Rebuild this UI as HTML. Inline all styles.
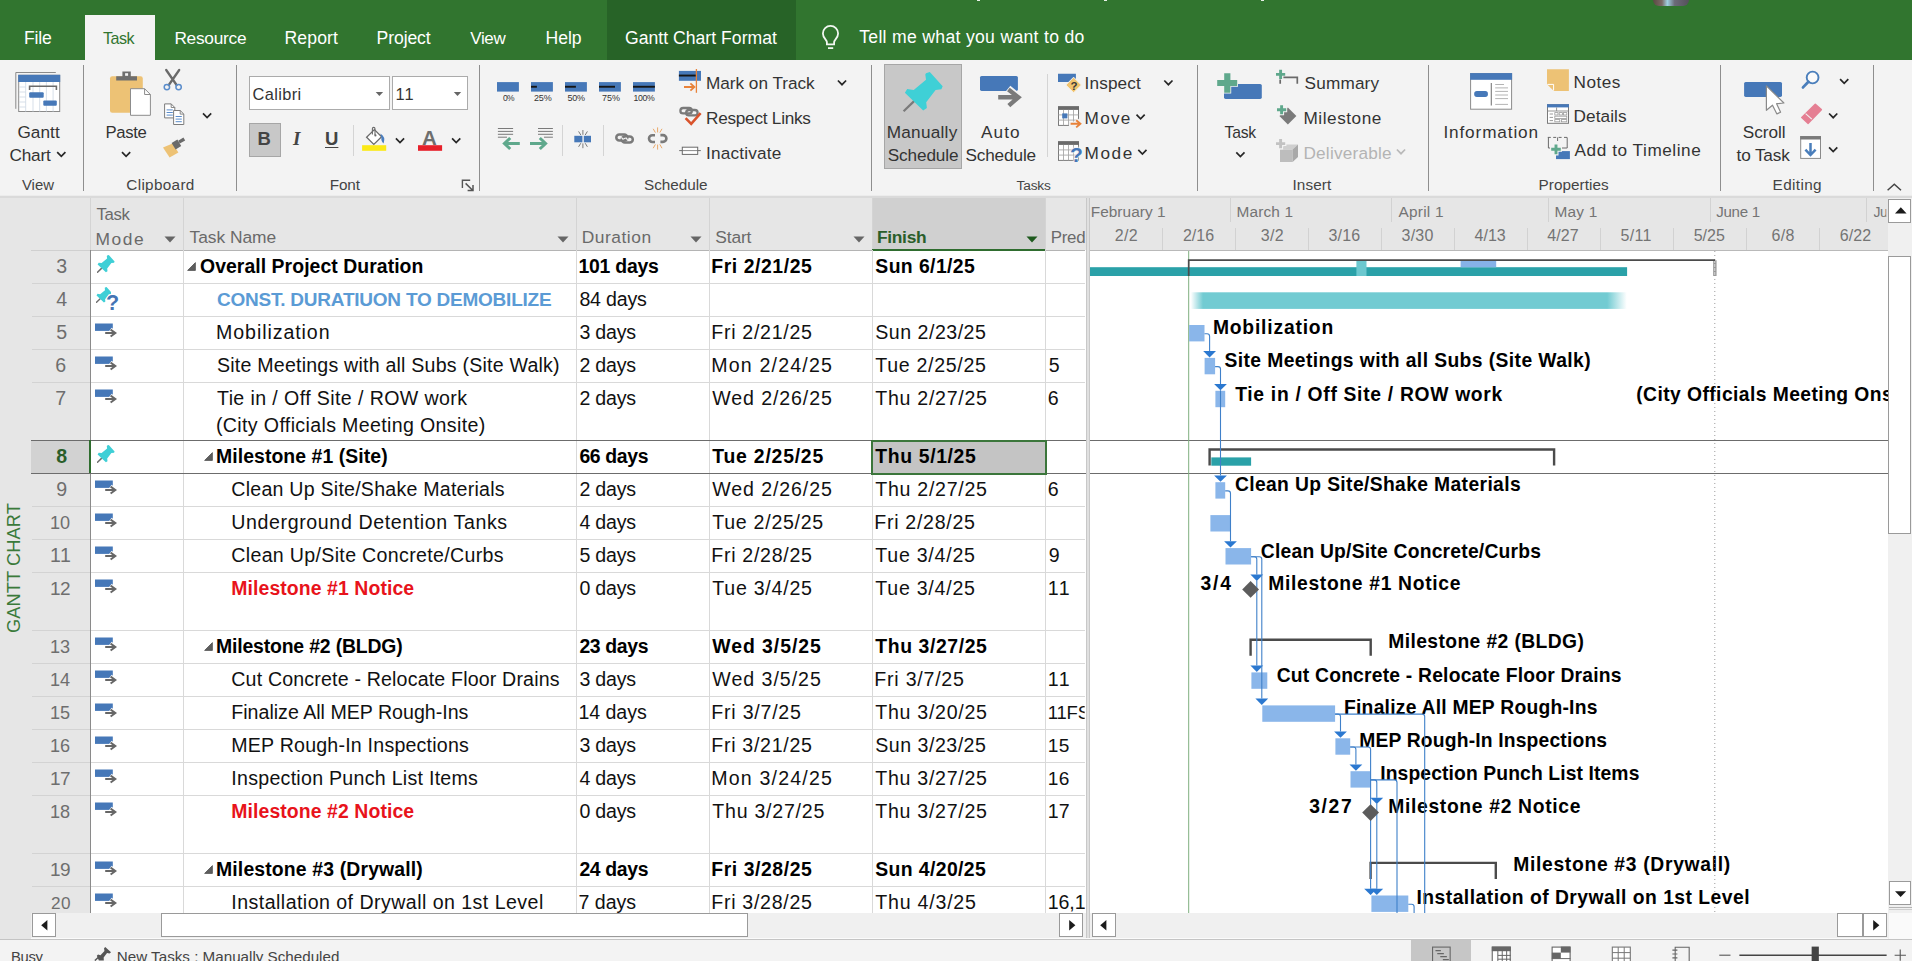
<!DOCTYPE html>
<html lang="en"><head><meta charset="utf-8"><title>Gantt Chart - Project</title>
<style>
html,body{margin:0;padding:0;background:#fff}
body{width:1912px;height:961px;overflow:hidden;position:relative;font-family:"Liberation Sans",sans-serif}
#app{position:absolute;left:0;top:0;width:1912px;height:961px;overflow:hidden}
#app div,#app svg,#app span{position:absolute}
.t{white-space:pre;line-height:1}
</style></head>
<body><div id="app">
<div style="left:0px;top:0px;width:1912px;height:60px;background:#31752f;"></div>
<div style="left:977px;top:0px;width:3px;height:1px;background:#e8f0e8;"></div>
<div style="left:1104px;top:0px;width:3px;height:1px;background:#e8f0e8;"></div>
<div style="left:1261px;top:0px;width:3px;height:1px;background:#e8f0e8;"></div>
<div style="left:1653px;top:0;width:36px;height:6px;background:linear-gradient(90deg,#5a4a42 0,#7b6a66 25%,#9fd0e0 40%,#6b6a78 60%,#55505a 100%);border-radius:0 0 8px 8px"></div>
<div style="left:85px;top:15px;width:70px;height:45px;background:#f3f3f3;"></div>
<div style="left:607px;top:0px;width:189px;height:60px;background:#276327;"></div>
<span class="t" style="left:24.1px;top:30px;font-size:17.6px;color:#fff;letter-spacing:-0.25px;">File</span>
<span class="t" style="left:103.0px;top:30px;font-size:16.1px;color:#31752f;letter-spacing:-0.51px;">Task</span>
<span class="t" style="left:174.4px;top:30px;font-size:17.3px;color:#fff;letter-spacing:-0.25px;">Resource</span>
<span class="t" style="left:284.5px;top:30px;font-size:17.6px;color:#fff;letter-spacing:0.12px;">Report</span>
<span class="t" style="left:376.6px;top:30px;font-size:17.6px;color:#fff;letter-spacing:-0.11px;">Project</span>
<span class="t" style="left:470.3px;top:30px;font-size:17px;color:#fff;letter-spacing:-0.39px;">View</span>
<span class="t" style="left:545.6px;top:30px;font-size:17.6px;color:#fff;letter-spacing:-0.07px;">Help</span>
<span class="t" style="left:625.0px;top:30px;font-size:17.6px;color:#fff;letter-spacing:0.02px;">Gantt Chart Format</span>
<span class="t" style="left:859.2px;top:29px;font-size:17.6px;color:#fff;letter-spacing:0.31px;">Tell me what you want to do</span>
<div style="left:0px;top:60px;width:1912px;height:136.2px;background:#f3f3f3;"></div>
<div style="left:0px;top:195px;width:1912px;height:1.2px;background:#ececec;"></div>
<div style="left:0px;top:196.2px;width:1912px;height:1.5px;background:#dadada;"></div>
<div style="left:83.2px;top:65px;width:1.1px;height:126px;background:#8e8e8e;"></div>
<div style="left:236.2px;top:65px;width:1.1px;height:126px;background:#8e8e8e;"></div>
<div style="left:479px;top:65px;width:1.1px;height:126px;background:#8e8e8e;"></div>
<div style="left:871.3px;top:65px;width:1.1px;height:126px;background:#8e8e8e;"></div>
<div style="left:1197px;top:65px;width:1.1px;height:126px;background:#8e8e8e;"></div>
<div style="left:1428px;top:65px;width:1.1px;height:126px;background:#8e8e8e;"></div>
<div style="left:1720.3px;top:65px;width:1.1px;height:126px;background:#8e8e8e;"></div>
<div style="left:1873.3px;top:65px;width:1.1px;height:126px;background:#8e8e8e;"></div>
<div style="left:1046.5px;top:74px;width:1px;height:83px;background:#d4d4d4;"></div>
<div style="left:353.3px;top:125px;width:1px;height:31px;background:#d4d4d4;"></div>
<div style="left:562.2px;top:125px;width:1px;height:31px;background:#d4d4d4;"></div>
<div style="left:603px;top:125px;width:1px;height:31px;background:#d4d4d4;"></div>
<span class="t" style="left:21.9px;top:178px;font-size:14.9px;color:#444;letter-spacing:0.02px;">View</span>
<span class="t" style="left:126.3px;top:177px;font-size:15.3px;color:#444;letter-spacing:0.32px;">Clipboard</span>
<span class="t" style="left:329.7px;top:177px;font-size:15.3px;color:#444;letter-spacing:-0.09px;">Font</span>
<span class="t" style="left:644.0px;top:177px;font-size:15.3px;color:#444;letter-spacing:-0.04px;">Schedule</span>
<span class="t" style="left:1016.6px;top:179px;font-size:13.7px;color:#444;letter-spacing:-0.19px;">Tasks</span>
<span class="t" style="left:1292.5px;top:177px;font-size:15.3px;color:#444;letter-spacing:0.10px;">Insert</span>
<span class="t" style="left:1538.5px;top:177px;font-size:15.3px;color:#444;letter-spacing:0.05px;">Properties</span>
<span class="t" style="left:1772.6px;top:177px;font-size:15.3px;color:#444;letter-spacing:0.36px;">Editing</span>
<span class="t" style="left:17.4px;top:124px;font-size:17.2px;color:#333;letter-spacing:0.08px;">Gantt</span>
<span class="t" style="left:9.5px;top:147px;font-size:17.2px;color:#333;letter-spacing:-0.19px;">Chart</span>
<span class="t" style="left:105.4px;top:125px;font-size:16.7px;color:#333;letter-spacing:-0.30px;">Paste</span>
<div style="left:884px;top:64px;width:78px;height:104.5px;background:#c8c8c8;border:1px solid #a6a6a6;box-sizing:border-box"></div>
<span class="t" style="left:886.7px;top:124px;font-size:17.2px;color:#333;letter-spacing:0.26px;">Manually</span>
<span class="t" style="left:887.7px;top:147px;font-size:17.2px;color:#333;letter-spacing:-0.12px;">Schedule</span>
<span class="t" style="left:981.0px;top:124px;font-size:17.2px;color:#333;letter-spacing:1.07px;">Auto</span>
<span class="t" style="left:965.4px;top:147px;font-size:17.2px;color:#333;letter-spacing:-0.13px;">Schedule</span>
<span class="t" style="left:1224.5px;top:125px;font-size:15.7px;color:#333;letter-spacing:-0.20px;">Task</span>
<span class="t" style="left:1443.4px;top:124px;font-size:17.2px;color:#333;letter-spacing:0.87px;">Information</span>
<span class="t" style="left:1742.8px;top:124px;font-size:17.2px;color:#333;letter-spacing:-0.03px;">Scroll</span>
<span class="t" style="left:1736.6px;top:147px;font-size:17.2px;color:#333;letter-spacing:-0.16px;">to Task</span>
<span class="t" style="left:706.0px;top:75px;font-size:17.2px;color:#333;letter-spacing:-0.02px;">Mark on Track</span>
<span class="t" style="left:706.0px;top:110px;font-size:17.2px;color:#333;letter-spacing:-0.25px;">Respect Links</span>
<span class="t" style="left:706.0px;top:145px;font-size:17.2px;color:#333;letter-spacing:0.18px;">Inactivate</span>
<span class="t" style="left:1084.6px;top:75px;font-size:17.2px;color:#333;letter-spacing:0.13px;">Inspect</span>
<span class="t" style="left:1084.6px;top:110px;font-size:17.2px;color:#333;letter-spacing:1.24px;">Move</span>
<span class="t" style="left:1084.6px;top:145px;font-size:17.2px;color:#333;letter-spacing:1.55px;">Mode</span>
<span class="t" style="left:1304.5px;top:75px;font-size:17.2px;color:#333;letter-spacing:0.18px;">Summary</span>
<span class="t" style="left:1303.5px;top:110px;font-size:17.2px;color:#333;letter-spacing:0.54px;">Milestone</span>
<span class="t" style="left:1303.5px;top:145px;font-size:17.2px;color:#b4b4b4;letter-spacing:0.20px;">Deliverable</span>
<span class="t" style="left:1573.6px;top:74px;font-size:17.2px;color:#333;letter-spacing:0.47px;">Notes</span>
<span class="t" style="left:1573.6px;top:108px;font-size:17.2px;color:#333;letter-spacing:0.06px;">Details</span>
<span class="t" style="left:1574.6px;top:142px;font-size:17.2px;color:#333;letter-spacing:0.55px;">Add to Timeline</span>
<div style="left:249.2px;top:76.3px;width:140.6px;height:34.2px;background:#fff;border:1px solid #ababab;box-sizing:border-box"></div>
<div style="left:392.3px;top:76.3px;width:75.3px;height:34.2px;background:#fff;border:1px solid #ababab;box-sizing:border-box"></div>
<span class="t" style="left:252.4px;top:86px;font-size:16.4px;color:#333;letter-spacing:0.40px;">Calibri</span>
<span class="t" style="left:395.6px;top:86px;font-size:16.4px;color:#333;letter-spacing:0.90px;">11</span>
<div style="left:249px;top:123px;width:31.5px;height:33.6px;background:#c8c8c8;border:1px solid #a6a6a6;box-sizing:border-box"></div>
<span class="t" style="left:257.4px;top:130px;font-size:18.5px;color:#444;font-weight:bold;">B</span>
<span class="t" style="left:293.0px;top:129px;font-size:19px;color:#444;font-style:italic;font-family:'Liberation Serif',serif;font-weight:bold;">I</span>
<span class="t" style="left:325.0px;top:130px;font-size:18.5px;color:#444;font-weight:bold;text-decoration:underline;text-underline-offset:2px;">U</span>
<span class="t" style="left:502.9px;top:94px;font-size:8.5px;color:#333;letter-spacing:-0.63px;">0%</span>
<span class="t" style="left:533.9px;top:94px;font-size:9px;color:#333;letter-spacing:-0.06px;">25%</span>
<span class="t" style="left:567.4px;top:94px;font-size:9px;color:#333;letter-spacing:-0.26px;">50%</span>
<span class="t" style="left:602.0px;top:94px;font-size:9px;color:#333;letter-spacing:-0.06px;">75%</span>
<span class="t" style="left:633.4px;top:94px;font-size:8.7px;color:#333;letter-spacing:-0.33px;">100%</span>
<svg style="left:0;top:0" width="1912" height="200" viewBox="0 0 1912 200"><g fill="none" stroke="#f2f7f2" stroke-width="1.8"><path d="M826.9 44.3 V42.4 C826.9 39.6 822.9 38.2 822.9 33.5 A7.6 7.6 0 0 1 838.1 33.5 C838.1 38.2 834.1 39.6 834.1 42.4 V44.3 Z"/><path d="M828 48.1 H833.2"/></g><path d="M15.8 108.8 V72.5 H55.8" fill="none" stroke="#8a8a8a" stroke-width="1"/><rect x="18.7" y="75.3" width="41" height="36.2" fill="#fff" stroke="#8a8a8a" stroke-width="1"/><rect x="18.2" y="74.8" width="42" height="7.2" fill="#4678b8"/><path d="M25.7 82 V111.5 M33 82 V111.5 M39.7 82 V111.5 M46.4 82 V111.5 M53.1 82 V111.5 M19 87 H25.7 M19 92 H25.7 M19 97 H25.7 M19 102 H25.7 M19 107 H25.7" stroke="#d3dbe6" stroke-width="0.9" fill="none"/><path d="M29.6 90 V86.3 H56.4 V90" fill="none" stroke="#6a6a6a" stroke-width="1.6"/><rect x="29.2" y="92.3" width="14.5" height="5.4" rx="1" fill="#4678b8"/><rect x="43.3" y="100.4" width="13.5" height="5.3" rx="1" fill="#4678b8"/><path d="M57.2 152.2 L61.3 156.4 L65.4 152.2" fill="none" stroke="#262626" stroke-width="1.7"/><rect x="110" y="76.2" width="32.8" height="36.6" rx="2.2" fill="#edc275"/><path d="M116.2 80.4 V76.2 H122.4 V71.6 H130.8 V76.2 H137 V80.4 Z" fill="#6e6e6e"/><rect x="125.1" y="73.2" width="3" height="2.6" fill="#f3f3f3"/><path d="M130.5 88.7 H144.6 L150.4 94.5 V115.3 H130.5 Z" fill="#fff" stroke="#8c8c8c" stroke-width="1"/><path d="M144.6 88.7 V94.5 H150.4" fill="none" stroke="#8c8c8c" stroke-width="1"/><path d="M122.0 152.2 L126.1 156.4 L130.2 152.2" fill="none" stroke="#262626" stroke-width="1.7"/><path d="M166.2 70 L176.6 85 M179.2 70 L168.8 85" stroke="#6a6a6a" stroke-width="2.3" fill="none" stroke-linecap="round"/><circle cx="166.9" cy="87.1" r="2.7" fill="none" stroke="#5b8dcb" stroke-width="1.5"/><circle cx="178.6" cy="87.1" r="2.7" fill="none" stroke="#5b8dcb" stroke-width="1.5"/><path d="M164.6 103.9 H171.2 L174.79999999999998 107.5 V117.9 H164.6 Z" fill="#fff" stroke="#7c7c7c" stroke-width="1"/><path d="M171.2 103.9 V107.5 H174.79999999999998" fill="none" stroke="#7c7c7c" stroke-width="0.9"/><path d="M166.6 109.9 H172.79999999999998 M166.6 112.5 H172.79999999999998 M166.6 115.10000000000001 H172.79999999999998" stroke="#5b8dcb" stroke-width="1" fill="none"/><path d="M173.6 110.5 H180.2 L183.79999999999998 114.1 V124.5 H173.6 Z" fill="#fff" stroke="#7c7c7c" stroke-width="1"/><path d="M180.2 110.5 V114.1 H183.79999999999998" fill="none" stroke="#7c7c7c" stroke-width="0.9"/><path d="M175.6 116.5 H181.79999999999998 M175.6 119.1 H181.79999999999998 M175.6 121.7 H181.79999999999998" stroke="#5b8dcb" stroke-width="1" fill="none"/><path d="M203.0 113.3 L207.1 117.5 L211.2 113.3" fill="none" stroke="#262626" stroke-width="1.7"/><path d="M163 147.6 L172.6 143.6 L178.4 152.6 L169.6 157.6 Z" fill="#edc275"/><path d="M171.6 143 L177.4 139.6 L181.2 146 L175.6 149.6 Z" fill="#6a6a6a"/><path d="M178.2 140.8 L183.4 137.6 L185.2 140.4 L179.8 143.6 Z" fill="#6a6a6a"/><path d="M375.7 92.0 H383.1 L379.4 96.0 Z" fill="#666"/><path d="M453.8 92.0 H461.2 L457.5 96.0 Z" fill="#666"/><path d="M374.4 129.6 L381.6 136.8 L373.8 144.4 L366.6 137.2 Z" fill="#fff" stroke="#6a6a6a" stroke-width="1.3"/><path d="M372.4 134.6 V128.6 Q372.4 127.4 373.6 127.4 Q375 127.4 375 128.8 V135" fill="none" stroke="#6a6a6a" stroke-width="1.1"/><circle cx="375.4" cy="135.4" r="1.1" fill="#6a6a6a"/><path d="M380.4 133.6 Q386 137 383.6 143.4 Q380.8 141 381.4 137.4 Z" fill="#4a7ebf"/><rect x="362.1" y="145.2" width="24.1" height="5.6" fill="#fbe916"/><path d="M395.9 138.4 L400.0 142.6 L404.1 138.4" fill="none" stroke="#262626" stroke-width="1.7"/><rect x="418" y="145.2" width="24.1" height="5.6" fill="#e6202a"/><path d="M452.1 138.4 L456.2 142.6 L460.3 138.4" fill="none" stroke="#262626" stroke-width="1.7"/><path d="M462.4 188 V180.2 H470.2" fill="none" stroke="#555" stroke-width="1.4"/><path d="M465.6 183.4 L472.6 190.2 M467.6 190.4 H473 V185" fill="none" stroke="#555" stroke-width="1.5"/><rect x="497" y="82.1" width="21.9" height="9.5" fill="#4678b8"/><rect x="531" y="82.1" width="21.9" height="9.5" fill="#4678b8"/><rect x="531" y="85.8" width="5.9" height="1.9" fill="#151515"/><rect x="565" y="82.1" width="21.9" height="9.5" fill="#4678b8"/><rect x="565" y="85.8" width="10.9" height="1.9" fill="#151515"/><rect x="599" y="82.1" width="21.9" height="9.5" fill="#4678b8"/><rect x="599" y="85.8" width="16.0" height="1.9" fill="#151515"/><rect x="633" y="82.1" width="21.9" height="9.5" fill="#4678b8"/><rect x="633" y="85.8" width="21.9" height="1.9" fill="#151515"/><path d="M497.9 128.5 H513.1 M497.9 131.4 H513.1 M497.9 134.3 H513.1 M497.9 137.2 H507" stroke="#7a7a7a" stroke-width="1" fill="none"/><path d="M519.8 143.5 H505 M510.2 138 L504.4 143.5 L510.2 149" stroke="#5fa88c" stroke-width="3" fill="none"/><path d="M538 128.5 H552.9 M538 131.4 H552.9 M538 134.3 H552.9 M544 137.2 H552.9" stroke="#7a7a7a" stroke-width="1" fill="none"/><path d="M530 143.5 H545 M539.8 138 L545.6 143.5 L539.8 149" stroke="#5fa88c" stroke-width="3" fill="none"/><rect x="574.3" y="135.8" width="8.1" height="6.5" fill="#4678b8"/><rect x="583.8" y="135.8" width="7.2" height="6.5" fill="#4678b8"/><path d="M582.9 130 V134.8 M578.6 131.4 L580.8 135 M587.4 131.4 L585.2 135 M582.9 148.2 V143.4 M578.6 146.8 L580.8 143.2 M587.4 146.8 L585.2 143.2" stroke="#7a7a7a" stroke-width="1" fill="none"/><g fill="none" stroke="#7a7a7a" stroke-width="2.5"><rect x="616.3" y="134.6" width="11" height="6" rx="3"/><rect x="621.8" y="136.6" width="11" height="6" rx="3"/></g><path d="M621.4 137.4 L623.4 139.6 M625.8 137.6 L627.6 139.8" stroke="#f3f3f3" stroke-width="1.3"/><g fill="none" stroke="#7a7a7a" stroke-width="2.6"><path d="M655 135.2 H652.4 A3.4 3.4 0 0 0 652.4 142 H655"/><path d="M660.4 141.9 H663 A3.4 3.4 0 0 0 663 135.1 H660.4"/></g><path d="M657.6 127.4 V132.4 M653.2 128.8 L655.4 132.6 M662 128.8 L659.8 132.6 M657.6 149.6 V144.6 M653.2 148.2 L655.4 144.4 M662 148.2 L659.8 144.4" stroke="#eaa868" stroke-width="1" fill="none"/><rect x="678.9" y="70.9" width="22.1" height="9.9" fill="#4678b8"/><rect x="678.9" y="74.6" width="18" height="1.9" fill="#151515"/><path d="M696.4 69 V92.8" stroke="#e8823a" stroke-width="1.3"/><path d="M684 87 H694 M690.4 83.4 L694.4 87 L690.4 90.6" stroke="#e8823a" stroke-width="1.8" fill="none"/><path d="M837.9 80.5 L842.0 84.7 L846.1 80.5" fill="none" stroke="#262626" stroke-width="1.7"/><g fill="none" stroke="#7a7a7a" stroke-width="2.3"><rect x="680.4" y="108" width="11.4" height="5.4" rx="2.7"/><rect x="686.2" y="110" width="11.4" height="5.4" rx="2.7"/></g><path d="M685.6 118.2 L691.2 123.8 L700.6 113.2" fill="none" stroke="#d9532c" stroke-width="2.6"/><path d="M679.2 150.6 H700.8" stroke="#6a6a6a" stroke-width="1"/><rect x="682.3" y="147.2" width="15.4" height="7.2" fill="#fff" stroke="#6a6a6a" stroke-width="1"/><path d="M682.3 150.6 H697.7" stroke="#6a6a6a" stroke-width="0.8"/><path d="M903.6 111.2 L914.6 100.6" stroke="#7a7a7a" stroke-width="2.2" fill="none"/><path d="M926 73.2 L929.8 71.9 L942.7 86.2 L941.4 89.2 L935.6 89.9 L926.2 102.2 L926.9 108.1 L923.2 110.4 L904.9 92.8 L907.2 89 L913.7 89.9 L926 79.8 L925.3 74.6 Z" fill="#3fd0d6"/><rect x="980" y="76" width="37.9" height="14.9" rx="1.6" fill="#4678b8"/><path d="M998.2 97.2 H1018 M1008 88.6 L1018.6 97.2 L1008.4 106.4" stroke="#f3f3f3" stroke-width="7.4" fill="none"/><path d="M998.2 97.3 H1017.4 M1008.4 89.6 L1018.4 97.3 L1008.8 105.6" stroke="#7a7a7a" stroke-width="4.4" fill="none"/><path d="M1058 73.8 H1075.9 V79 L1070 82 H1058 Z" fill="#4678b8"/><path d="M1073.6 77.2 L1081.4 85 L1073.6 92.8 L1065.8 85 Z" fill="#f2c46e" stroke="#f3f3f3" stroke-width="1"/><path d="M1164.3 80.5 L1168.4 84.7 L1172.5 80.5" fill="none" stroke="#262626" stroke-width="1.7"/><rect x="1058.5" y="106.8" width="20" height="18.6" fill="#fff" stroke="#7a7a7a" stroke-width="1"/><rect x="1058" y="106.3" width="21" height="3.6" fill="#6a6a6a"/><path d="M1063.5 109.89999999999999 V125.3 M1068.5 109.89999999999999 V125.3 M1073.5 109.89999999999999 V125.3 M1058.5 114.89999999999999 H1078.5 M1058.5 120.1 H1078.5" stroke="#a8a8a8" stroke-width="0.9" fill="none"/><rect x="1058.5" y="141.8" width="20" height="18.6" fill="#fff" stroke="#7a7a7a" stroke-width="1"/><rect x="1058" y="141.3" width="21" height="3.6" fill="#6a6a6a"/><path d="M1063.5 144.9 V160.3 M1068.5 144.9 V160.3 M1073.5 144.9 V160.3 M1058.5 149.9 H1078.5 M1058.5 155.10000000000002 H1078.5" stroke="#a8a8a8" stroke-width="0.9" fill="none"/><rect x="1062.2" y="113.4" width="5.2" height="5" fill="#4678b8"/><path d="M1069 123.8 H1080.6 M1076 119.6 L1080.6 123.8 L1076 128" stroke="#f3f3f3" stroke-width="4.4" fill="none"/><path d="M1070.6 123.8 H1080 M1076.2 120.2 L1080.4 123.8 L1076.2 127.4" stroke="#e8823a" stroke-width="1.9" fill="none"/><path d="M1136.5 114.7 L1140.6 118.9 L1144.7 114.7" fill="none" stroke="#262626" stroke-width="1.7"/><path d="M1138.3 149.9 L1142.4 154.1 L1146.5 149.9" fill="none" stroke="#262626" stroke-width="1.7"/><rect x="1224" y="84" width="37.8" height="14.9" rx="1.6" fill="#4678b8"/><path d="M1223.4 72.4 H1231.2 V79.2 H1238 V86.8 H1231.2 V93.6 H1223.4 V86.8 H1216.4 V79.2 H1223.4 Z" fill="#f3f3f3"/><path d="M1224.2 73.2 H1230.4 V80 H1237.2 V86 H1230.4 V92.8 H1224.2 V86 H1217.2 V80 H1224.2 Z" fill="#5fa88c"/><path d="M1236.3 152.3 L1240.4 156.5 L1244.5 152.3" fill="none" stroke="#262626" stroke-width="1.7"/><path d="M1280.2 83.8 V79.6 M1283.4 77.4 H1297.3 V83.8" fill="none" stroke="#6a6a6a" stroke-width="1.7"/><path d="M1280.6 69.8 V79 M1276 74.4 H1285.2" stroke="#5fa88c" stroke-width="2.9" fill="none"/><path d="M1287.9 107.6 L1296.4 116.1 L1287.9 124.6 L1279.4 116.1 Z" fill="#7a7a7a"/><path d="M1281.6 104 V115.2 M1276 109.7 H1287.2" stroke="#f3f3f3" stroke-width="5" fill="none"/><path d="M1281.6 105.2 V114.2 M1277 109.7 H1286.2" stroke="#5fa88c" stroke-width="2.9" fill="none"/><path d="M1280 149.4 H1292.6 V162 H1280 Z" fill="#bdbdbd"/><path d="M1280 149.4 L1285.4 144.6 H1298 L1292.6 149.4 Z" fill="#cfcfcf"/><path d="M1292.6 149.4 L1298 144.6 V157 L1292.6 162 Z" fill="#a9a9a9"/><path d="M1280.6 138 V149.4 M1275 143.6 H1286.4" stroke="#f3f3f3" stroke-width="5" fill="none"/><path d="M1280.6 139 V148.2 M1276 143.6 H1285.2" stroke="#c2c2c2" stroke-width="2.9" fill="none"/><path d="M1396.9 149.5 L1401.0 153.7 L1405.1 149.5" fill="none" stroke="#b9b9b9" stroke-width="1.7"/><rect x="1470.6" y="73.6" width="41" height="35.6" fill="#fff" stroke="#8a8a8a" stroke-width="1"/><rect x="1470.1" y="73.1" width="42" height="6.7" fill="#4678b8"/><rect x="1474.2" y="91" width="13.7" height="5.9" rx="2.6" fill="#4678b8"/><path d="M1491.3 83 V105.6" stroke="#7a7a7a" stroke-width="1.1"/><path d="M1495.2 84.5 H1504 M1495.2 87.9 H1508 M1495.2 91.4 H1508 M1495.2 95 H1508 M1495.2 98.6 H1508 M1495.2 104.4 H1508" stroke="#b4b4b4" stroke-width="1" fill="none"/><path d="M1547 69.2 H1568.9 V90.9 H1553.8 L1547 84.2 Z" fill="#edc275"/><path d="M1547.4 84.4 H1553.6 V90.6" fill="none" stroke="#fff" stroke-width="1"/><rect x="1547.5" y="104.7" width="21" height="18.6" fill="#fff" stroke="#7a7a7a" stroke-width="1"/><rect x="1547" y="104.2" width="22" height="3.2" fill="#4678b8"/><path d="M1556.6 107.4 V111 M1547.5 111 H1568.5" stroke="#8a8a8a" stroke-width="0.9" fill="none"/><path d="M1549.6 114 H1553 M1549.6 117.4 H1553 M1549.6 120.6 H1553" stroke="#9a9a9a" stroke-width="1" fill="none"/><g fill="none" stroke="#9a9a9a" stroke-width="0.8"><rect x="1554.8" y="112.6" width="3.2" height="2.4"/><rect x="1559.2" y="112.6" width="3.2" height="2.4"/><rect x="1563.6" y="112.6" width="3.2" height="2.4"/><rect x="1554.8" y="116.2" width="12" height="2.2"/><rect x="1554.8" y="119.6" width="5" height="2.2"/><rect x="1561.4" y="119.6" width="5.4" height="2.2"/></g><path d="M1547.8 137.4 H1567.6" stroke="#6a6a6a" stroke-width="1" stroke-dasharray="3 2.4" fill="none"/><path d="M1548.4 137.4 V148 H1552 M1557.6 137.4 V141 M1567.2 137.4 V148 H1562" stroke="#6a6a6a" stroke-width="1" fill="none"/><rect x="1556" y="151.1" width="13.9" height="8" fill="#4678b8"/><path d="M1556 143.2 V155.4 M1550 149.3 H1562" stroke="#f3f3f3" stroke-width="5" fill="none"/><path d="M1556 144.4 V154.2 M1551.2 149.3 H1560.8" stroke="#5fa88c" stroke-width="2.9" fill="none"/><rect x="1744.1" y="81.9" width="37.9" height="15" rx="1.6" fill="#4678b8"/><path d="M1766.4 85.9 V110.3 L1772.5 105.2 L1776.9 113.9 L1780.6 112.2 L1776.6 103.7 L1783.9 103 Z" fill="#fff" stroke="#8a8a8a" stroke-width="1.2" stroke-linejoin="round"/><circle cx="1812.6" cy="77.5" r="5.9" fill="#fff" fill-opacity="0.6" stroke="#4a7ebb" stroke-width="1.9"/><path d="M1808.4 81.8 L1803 87.4" stroke="#4a7ebb" stroke-width="2.8" stroke-linecap="round"/><path d="M1840.1 79.1 L1844.2 83.3 L1848.3 79.1" fill="none" stroke="#262626" stroke-width="1.7"/><path d="M1815.3 104.4 L1821.3 109.6 L1808.2 123.3 L1801.8 117.5 Z" fill="#e57f93" stroke="#e57f93" stroke-width="1.6" stroke-linejoin="round"/><path d="M1805.6 113.6 L1811.8 119.2" stroke="#f3f3f3" stroke-width="1.1"/><path d="M1829.1 113.5 L1833.2 117.7 L1837.3 113.5" fill="none" stroke="#262626" stroke-width="1.7"/><rect x="1800.7" y="136.6" width="19.8" height="21.8" fill="#fff" stroke="#8a8a8a" stroke-width="1"/><rect x="1800.2" y="136.1" width="20.8" height="3.4" fill="#7a7a7a"/><path d="M1810.5 143 V154.6 M1805.4 149.6 L1810.5 155 L1815.6 149.6" stroke="#4a7ebb" stroke-width="2.5" fill="none"/><path d="M1829.1 147.3 L1833.2 151.5 L1837.3 147.3" fill="none" stroke="#262626" stroke-width="1.7"/><path d="M1887.6 190.2 L1894.3 184.2 L1901 190.2" fill="none" stroke="#444" stroke-width="1.5"/></svg>
<span class="t" style="left:422.1px;top:128px;font-size:20.5px;color:#6e6e6e;font-weight:bold;">A</span>
<span class="t" style="left:1070.6px;top:81px;font-size:11.5px;color:#3a3a3a;font-weight:bold;">?</span>
<span class="t" style="left:1070.0px;top:144px;font-size:21px;color:#4577b8;font-weight:bold;text-shadow:0 0 1px #f3f3f3,0 0 2px #f3f3f3,0 0 2px #f3f3f3,0 0 3px #f3f3f3;">?</span>
<div style="left:0px;top:197.7px;width:1912px;height:764px;background:#fff;"></div>
<div style="left:0px;top:197.7px;width:31px;height:742px;background:#e6e6e6;"></div>
<div style="left:31px;top:197.7px;width:1058px;height:52.6px;background:#e6e6e6;"></div>
<div style="left:31px;top:250.3px;width:59.4px;height:663px;background:#e6e6e6;"></div>
<div style="left:872px;top:197.7px;width:173.4px;height:52.6px;background:#d0d0d0;"></div>
<div style="left:90.4px;top:198px;width:1px;height:52px;background:#d4d4d4;"></div>
<div style="left:183.4px;top:198px;width:1px;height:52px;background:#d4d4d4;"></div>
<div style="left:576.4px;top:198px;width:1px;height:52px;background:#d4d4d4;"></div>
<div style="left:709.3px;top:198px;width:1px;height:52px;background:#d4d4d4;"></div>
<div style="left:872px;top:198px;width:1px;height:52px;background:#d4d4d4;"></div>
<div style="left:1045.4px;top:198px;width:1px;height:52px;background:#d4d4d4;"></div>
<div style="left:90.4px;top:249.6px;width:995px;height:1.2px;background:#b4b4b4;"></div>
<div style="left:31px;top:249.8px;width:59.4px;height:1px;background:#d0d0d0;"></div>
<div style="left:872px;top:248.8px;width:173.4px;height:2.2px;background:#2f6d2f;"></div>
<div style="left:90.4px;top:250.3px;width:1px;height:663px;background:#d9d9d9;"></div>
<div style="left:183.4px;top:250.3px;width:1px;height:663px;background:#d9d9d9;"></div>
<div style="left:576.4px;top:250.3px;width:1px;height:663px;background:#d9d9d9;"></div>
<div style="left:709.3px;top:250.3px;width:1px;height:663px;background:#d9d9d9;"></div>
<div style="left:872px;top:250.3px;width:1px;height:663px;background:#d9d9d9;"></div>
<div style="left:1045.4px;top:250.3px;width:1px;height:663px;background:#d9d9d9;"></div>
<div style="left:1085.5px;top:250.3px;width:1px;height:663px;background:#d9d9d9;"></div>
<div style="left:90.4px;top:282.7px;width:995.1px;height:1px;background:#d9d9d9;"></div>
<div style="left:31.5px;top:282.7px;width:59px;height:1px;background:#d3d3d3;"></div>
<div style="left:90.4px;top:315.7px;width:995.1px;height:1px;background:#d9d9d9;"></div>
<div style="left:31.5px;top:315.7px;width:59px;height:1px;background:#d3d3d3;"></div>
<div style="left:90.4px;top:348.6px;width:995.1px;height:1px;background:#d9d9d9;"></div>
<div style="left:31.5px;top:348.6px;width:59px;height:1px;background:#d3d3d3;"></div>
<div style="left:90.4px;top:381.5px;width:995.1px;height:1px;background:#d9d9d9;"></div>
<div style="left:31.5px;top:381.5px;width:59px;height:1px;background:#d3d3d3;"></div>
<div style="left:90.4px;top:439.9px;width:995.1px;height:1px;background:#d9d9d9;"></div>
<div style="left:31.5px;top:439.9px;width:59px;height:1px;background:#d3d3d3;"></div>
<div style="left:90.4px;top:472.9px;width:995.1px;height:1px;background:#d9d9d9;"></div>
<div style="left:31.5px;top:472.9px;width:59px;height:1px;background:#d3d3d3;"></div>
<div style="left:90.4px;top:505.8px;width:995.1px;height:1px;background:#d9d9d9;"></div>
<div style="left:31.5px;top:505.8px;width:59px;height:1px;background:#d3d3d3;"></div>
<div style="left:90.4px;top:538.8px;width:995.1px;height:1px;background:#d9d9d9;"></div>
<div style="left:31.5px;top:538.8px;width:59px;height:1px;background:#d3d3d3;"></div>
<div style="left:90.4px;top:571.7px;width:995.1px;height:1px;background:#d9d9d9;"></div>
<div style="left:31.5px;top:571.7px;width:59px;height:1px;background:#d3d3d3;"></div>
<div style="left:90.4px;top:630.2px;width:995.1px;height:1px;background:#d9d9d9;"></div>
<div style="left:31.5px;top:630.2px;width:59px;height:1px;background:#d3d3d3;"></div>
<div style="left:90.4px;top:663.1px;width:995.1px;height:1px;background:#d9d9d9;"></div>
<div style="left:31.5px;top:663.1px;width:59px;height:1px;background:#d3d3d3;"></div>
<div style="left:90.4px;top:696.1px;width:995.1px;height:1px;background:#d9d9d9;"></div>
<div style="left:31.5px;top:696.1px;width:59px;height:1px;background:#d3d3d3;"></div>
<div style="left:90.4px;top:729px;width:995.1px;height:1px;background:#d9d9d9;"></div>
<div style="left:31.5px;top:729px;width:59px;height:1px;background:#d3d3d3;"></div>
<div style="left:90.4px;top:761.9px;width:995.1px;height:1px;background:#d9d9d9;"></div>
<div style="left:31.5px;top:761.9px;width:59px;height:1px;background:#d3d3d3;"></div>
<div style="left:90.4px;top:794.9px;width:995.1px;height:1px;background:#d9d9d9;"></div>
<div style="left:31.5px;top:794.9px;width:59px;height:1px;background:#d3d3d3;"></div>
<div style="left:90.4px;top:853.3px;width:995.1px;height:1px;background:#d9d9d9;"></div>
<div style="left:31.5px;top:853.3px;width:59px;height:1px;background:#d3d3d3;"></div>
<div style="left:90.4px;top:886.2px;width:995.1px;height:1px;background:#d9d9d9;"></div>
<div style="left:31.5px;top:886.2px;width:59px;height:1px;background:#d3d3d3;"></div>
<div style="left:31.5px;top:250.3px;width:59px;height:663px;background:transparent;"></div>
<div style="left:90px;top:250.3px;width:1.1px;height:663px;background:#8a8a8a;"></div>
<div style="left:31px;top:440.4px;width:59.4px;height:33px;background:#d2d2d2;"></div>
<div style="left:31px;top:439.9px;width:1857px;height:1.1px;background:#6c6c6c;"></div>
<div style="left:31px;top:473px;width:1857px;height:1.1px;background:#6c6c6c;"></div>
<div style="left:89.2px;top:440.4px;width:2px;height:33px;background:#2f6d2f;"></div>
<div style="left:871.4px;top:439.6px;width:175.8px;height:35px;background:#c4c4c4;border:2px solid #3b763b;box-sizing:border-box"></div>
<div style="left:1085.5px;top:197.7px;width:4.2px;height:742px;background:#e0e0e0;"></div>
<div style="left:1085.5px;top:197.7px;width:1px;height:742px;background:#c8c8c8;"></div>
<div style="left:1088.9px;top:197.7px;width:1px;height:742px;background:#c8c8c8;"></div>
<span class="t" style="left:96.4px;top:207px;font-size:16.8px;color:#6a6a6a;letter-spacing:-0.34px;">Task</span>
<span class="t" style="left:95.4px;top:231px;font-size:17.4px;color:#6a6a6a;letter-spacing:1.57px;">Mode</span>
<span class="t" style="left:189.5px;top:229px;font-size:17.4px;color:#6a6a6a;letter-spacing:-0.04px;">Task Name</span>
<span class="t" style="left:581.8px;top:229px;font-size:17.4px;color:#6a6a6a;letter-spacing:0.51px;">Duration</span>
<span class="t" style="left:715.3px;top:229px;font-size:17.4px;color:#6a6a6a;letter-spacing:-0.17px;">Start</span>
<span class="t" style="left:877.0px;top:229px;font-size:17.4px;color:#2a5e2a;letter-spacing:-0.32px;font-weight:bold;">Finish</span>
<span class="t" style="left:1050.8px;top:230px;font-size:16.9px;color:#6a6a6a;letter-spacing:-0.29px;">Pred</span>
<svg style="left:164px;top:236px" width="12" height="7" viewBox="0 0 12 7"><path d="M0.5 0.5 H11.5 L6 6.5 Z" fill="#666"/></svg>
<svg style="left:557px;top:236px" width="12" height="7" viewBox="0 0 12 7"><path d="M0.5 0.5 H11.5 L6 6.5 Z" fill="#666"/></svg>
<svg style="left:689.6px;top:236px" width="12" height="7" viewBox="0 0 12 7"><path d="M0.5 0.5 H11.5 L6 6.5 Z" fill="#666"/></svg>
<svg style="left:853px;top:236px" width="12" height="7" viewBox="0 0 12 7"><path d="M0.5 0.5 H11.5 L6 6.5 Z" fill="#666"/></svg>
<svg style="left:1026px;top:236px" width="12" height="7" viewBox="0 0 12 7"><path d="M0.5 0.5 H11.5 L6 6.5 Z" fill="#1e5a1e"/></svg>
<div class="t" style="left:3px;top:636px;width:136px;height:22px;transform-origin:0 0;transform:rotate(-90deg);font-size:18.2px;line-height:22px;color:#3a7a3a;letter-spacing:0.1px;text-align:center">GANTT CHART</div>
<span class="t" style="left:56.2px;top:257px;font-size:19.6px;color:#6e6e6e;">3</span>
<svg style="left:97px;top:255.1px" width="17.7" height="17.7" viewBox="0 0 17.7 17.7"><path d="M0 17.7 L5 12.9" stroke="#6d6d6d" stroke-width="1.5" fill="none"/><path d="M10.1 0.6 L11.8 0 L17.6 6.4 L17.1 7.8 L14.4 8.1 L10.2 13.6 L10.5 16.3 L8.9 17.3 L0.6 9.4 L1.7 7.7 L4.6 8.1 L10.1 3.6 L9.8 1.2 Z" fill="#3fcfd6"/></svg>
<svg style="left:186.6px;top:261.5px" width="9" height="9" viewBox="0 0 9 9"><path d="M8.4 0.6 V8.4 H0.6 Z" fill="#5e5e5e" stroke="#444" stroke-width="0.7"/></svg>
<span class="t" style="left:200.0px;top:257px;font-size:19.4px;color:#000;letter-spacing:0.06px;font-weight:bold;">Overall Project Duration</span>
<span class="t" style="left:578.4px;top:257px;font-size:19.4px;color:#000;letter-spacing:-0.22px;font-weight:bold;">101 days</span>
<span class="t" style="left:711.3px;top:257px;font-size:19.4px;color:#000;letter-spacing:0.56px;font-weight:bold;">Fri 2/21/25</span>
<span class="t" style="left:875.3px;top:257px;font-size:19.4px;color:#000;letter-spacing:0.40px;font-weight:bold;">Sun 6/1/25</span>
<span class="t" style="left:56.2px;top:290px;font-size:19.6px;color:#6e6e6e;">4</span>
<svg style="left:95.6px;top:287.4px" width="15.8" height="15.8" viewBox="0 0 17.7 17.7"><path d="M0 17.7 L5 12.9" stroke="#6d6d6d" stroke-width="1.5" fill="none"/><path d="M10.1 0.6 L11.8 0 L17.6 6.4 L17.1 7.8 L14.4 8.1 L10.2 13.6 L10.5 16.3 L8.9 17.3 L0.6 9.4 L1.7 7.7 L4.6 8.1 L10.1 3.6 L9.8 1.2 Z" fill="#3fcfd6"/></svg>
<span class="t" style="left:105.9px;top:293px;font-size:21.5px;color:#4574b4;font-weight:bold;text-shadow:0 0 1.5px #fff,0 0 1.5px #fff;">?</span>
<span class="t" style="left:217.0px;top:290px;font-size:19px;color:#5b9bd5;letter-spacing:-0.23px;font-weight:bold;">CONST. DURATIUON TO DEMOBILIZE</span>
<span class="t" style="left:579.4px;top:290px;font-size:19.6px;color:#111;letter-spacing:-0.20px;">84 days</span>
<span class="t" style="left:56.2px;top:323px;font-size:19.6px;color:#6e6e6e;">5</span>
<svg style="left:95.1px;top:322.9px" width="22" height="16" viewBox="0 0 22 16"><rect x="0" y="0.5" width="17.8" height="7.4" fill="#4678b8"/><path d="M9.5 10 H19.5 M15.4 6.4 L20 10 L15.4 13.8" stroke="#fff" stroke-width="4" fill="none"/><path d="M10.2 10 H19.8 M15.6 6.6 L20.4 10 L15.6 13.6" stroke="#666" stroke-width="1.9" fill="none"/></svg>
<span class="t" style="left:216.0px;top:323px;font-size:19.6px;color:#111;letter-spacing:0.92px;">Mobilization</span>
<span class="t" style="left:579.4px;top:323px;font-size:19.6px;color:#111;letter-spacing:-0.21px;">3 days</span>
<span class="t" style="left:711.3px;top:323px;font-size:19.6px;color:#111;letter-spacing:0.69px;">Fri 2/21/25</span>
<span class="t" style="left:875.3px;top:323px;font-size:19.6px;color:#111;letter-spacing:0.49px;">Sun 2/23/25</span>
<span class="t" style="left:55.2px;top:356px;font-size:19.6px;color:#6e6e6e;">6</span>
<svg style="left:95.1px;top:355.8px" width="22" height="16" viewBox="0 0 22 16"><rect x="0" y="0.5" width="17.8" height="7.4" fill="#4678b8"/><path d="M9.5 10 H19.5 M15.4 6.4 L20 10 L15.4 13.8" stroke="#fff" stroke-width="4" fill="none"/><path d="M10.2 10 H19.8 M15.6 6.6 L20.4 10 L15.6 13.6" stroke="#666" stroke-width="1.9" fill="none"/></svg>
<span class="t" style="left:217.0px;top:356px;font-size:19.6px;color:#111;letter-spacing:0.21px;">Site Meetings with all Subs (Site Walk)</span>
<span class="t" style="left:579.4px;top:356px;font-size:19.6px;color:#111;letter-spacing:-0.21px;">2 days</span>
<span class="t" style="left:711.3px;top:356px;font-size:19.6px;color:#111;letter-spacing:1.17px;">Mon 2/24/25</span>
<span class="t" style="left:875.3px;top:356px;font-size:19.6px;color:#111;letter-spacing:0.67px;">Tue 2/25/25</span>
<span class="t" style="left:1048.7px;top:356px;font-size:19.6px;color:#111;">5</span>
<span class="t" style="left:55.2px;top:389px;font-size:19.6px;color:#6e6e6e;">7</span>
<svg style="left:95.1px;top:388.7px" width="22" height="16" viewBox="0 0 22 16"><rect x="0" y="0.5" width="17.8" height="7.4" fill="#4678b8"/><path d="M9.5 10 H19.5 M15.4 6.4 L20 10 L15.4 13.8" stroke="#fff" stroke-width="4" fill="none"/><path d="M10.2 10 H19.8 M15.6 6.6 L20.4 10 L15.6 13.6" stroke="#666" stroke-width="1.9" fill="none"/></svg>
<span class="t" style="left:217.0px;top:389px;font-size:19.6px;color:#111;letter-spacing:0.39px;">Tie in / Off Site / ROW work</span>
<span class="t" style="left:216.0px;top:416px;font-size:19.6px;color:#111;letter-spacing:0.35px;">(City Officials Meeting Onsite)</span>
<span class="t" style="left:579.4px;top:389px;font-size:19.6px;color:#111;letter-spacing:-0.21px;">2 days</span>
<span class="t" style="left:712.3px;top:389px;font-size:19.6px;color:#111;letter-spacing:0.88px;">Wed 2/26/25</span>
<span class="t" style="left:875.3px;top:389px;font-size:19.6px;color:#111;letter-spacing:0.70px;">Thu 2/27/25</span>
<span class="t" style="left:1047.7px;top:389px;font-size:19.6px;color:#111;">6</span>
<span class="t" style="left:56.2px;top:447px;font-size:19.6px;color:#2a5e2a;font-weight:bold;">8</span>
<svg style="left:97px;top:445.2px" width="17.7" height="17.7" viewBox="0 0 17.7 17.7"><path d="M0 17.7 L5 12.9" stroke="#6d6d6d" stroke-width="1.5" fill="none"/><path d="M10.1 0.6 L11.8 0 L17.6 6.4 L17.1 7.8 L14.4 8.1 L10.2 13.6 L10.5 16.3 L8.9 17.3 L0.6 9.4 L1.7 7.7 L4.6 8.1 L10.1 3.6 L9.8 1.2 Z" fill="#3fcfd6"/></svg>
<svg style="left:203.6px;top:451.6px" width="9" height="9" viewBox="0 0 9 9"><path d="M8.4 0.6 V8.4 H0.6 Z" fill="#5e5e5e" stroke="#444" stroke-width="0.7"/></svg>
<span class="t" style="left:216.0px;top:447px;font-size:19.4px;color:#000;letter-spacing:0.08px;font-weight:bold;">Milestone #1 (Site)</span>
<span class="t" style="left:579.4px;top:447px;font-size:19.4px;color:#000;letter-spacing:-0.34px;font-weight:bold;">66 days</span>
<span class="t" style="left:712.3px;top:447px;font-size:19.4px;color:#000;letter-spacing:0.78px;font-weight:bold;">Tue 2/25/25</span>
<span class="t" style="left:875.3px;top:447px;font-size:19.4px;color:#000;letter-spacing:0.63px;font-weight:bold;">Thu 5/1/25</span>
<span class="t" style="left:56.2px;top:480px;font-size:19.6px;color:#6e6e6e;">9</span>
<svg style="left:95.1px;top:480.1px" width="22" height="16" viewBox="0 0 22 16"><rect x="0" y="0.5" width="17.8" height="7.4" fill="#4678b8"/><path d="M9.5 10 H19.5 M15.4 6.4 L20 10 L15.4 13.8" stroke="#fff" stroke-width="4" fill="none"/><path d="M10.2 10 H19.8 M15.6 6.6 L20.4 10 L15.6 13.6" stroke="#666" stroke-width="1.9" fill="none"/></svg>
<span class="t" style="left:231.3px;top:480px;font-size:19.6px;color:#111;letter-spacing:0.23px;">Clean Up Site/Shake Materials</span>
<span class="t" style="left:579.4px;top:480px;font-size:19.6px;color:#111;letter-spacing:-0.21px;">2 days</span>
<span class="t" style="left:712.3px;top:480px;font-size:19.6px;color:#111;letter-spacing:0.88px;">Wed 2/26/25</span>
<span class="t" style="left:875.3px;top:480px;font-size:19.6px;color:#111;letter-spacing:0.70px;">Thu 2/27/25</span>
<span class="t" style="left:1047.7px;top:480px;font-size:19.6px;color:#111;">6</span>
<span class="t" style="left:50.0px;top:514px;font-size:18.1px;color:#6e6e6e;letter-spacing:-0.06px;">10</span>
<svg style="left:95.1px;top:513.0px" width="22" height="16" viewBox="0 0 22 16"><rect x="0" y="0.5" width="17.8" height="7.4" fill="#4678b8"/><path d="M9.5 10 H19.5 M15.4 6.4 L20 10 L15.4 13.8" stroke="#fff" stroke-width="4" fill="none"/><path d="M10.2 10 H19.8 M15.6 6.6 L20.4 10 L15.6 13.6" stroke="#666" stroke-width="1.9" fill="none"/></svg>
<span class="t" style="left:231.3px;top:513px;font-size:19.6px;color:#111;letter-spacing:0.61px;">Underground Detention Tanks</span>
<span class="t" style="left:579.4px;top:513px;font-size:19.6px;color:#111;letter-spacing:-0.21px;">4 days</span>
<span class="t" style="left:712.3px;top:513px;font-size:19.6px;color:#111;letter-spacing:0.71px;">Tue 2/25/25</span>
<span class="t" style="left:874.3px;top:513px;font-size:19.6px;color:#111;letter-spacing:0.69px;">Fri 2/28/25</span>
<span class="t" style="left:50.0px;top:546px;font-size:19.6px;color:#6e6e6e;letter-spacing:0.56px;">11</span>
<svg style="left:95.1px;top:546.0px" width="22" height="16" viewBox="0 0 22 16"><rect x="0" y="0.5" width="17.8" height="7.4" fill="#4678b8"/><path d="M9.5 10 H19.5 M15.4 6.4 L20 10 L15.4 13.8" stroke="#fff" stroke-width="4" fill="none"/><path d="M10.2 10 H19.8 M15.6 6.6 L20.4 10 L15.6 13.6" stroke="#666" stroke-width="1.9" fill="none"/></svg>
<span class="t" style="left:231.3px;top:546px;font-size:19.6px;color:#111;letter-spacing:0.32px;">Clean Up/Site Concrete/Curbs</span>
<span class="t" style="left:579.4px;top:546px;font-size:19.6px;color:#111;letter-spacing:-0.21px;">5 days</span>
<span class="t" style="left:711.3px;top:546px;font-size:19.6px;color:#111;letter-spacing:0.69px;">Fri 2/28/25</span>
<span class="t" style="left:875.3px;top:546px;font-size:19.6px;color:#111;letter-spacing:0.74px;">Tue 3/4/25</span>
<span class="t" style="left:1048.7px;top:546px;font-size:19.6px;color:#111;">9</span>
<span class="t" style="left:50.0px;top:579px;font-size:19px;color:#6e6e6e;letter-spacing:-0.57px;">12</span>
<svg style="left:95.1px;top:578.9px" width="22" height="16" viewBox="0 0 22 16"><rect x="0" y="0.5" width="17.8" height="7.4" fill="#4678b8"/><path d="M9.5 10 H19.5 M15.4 6.4 L20 10 L15.4 13.8" stroke="#fff" stroke-width="4" fill="none"/><path d="M10.2 10 H19.8 M15.6 6.6 L20.4 10 L15.6 13.6" stroke="#666" stroke-width="1.9" fill="none"/></svg>
<span class="t" style="left:231.3px;top:579px;font-size:19.4px;color:#e8131b;letter-spacing:0.10px;font-weight:bold;">Milestone #1 Notice</span>
<span class="t" style="left:579.4px;top:579px;font-size:19.6px;color:#111;letter-spacing:-0.21px;">0 days</span>
<span class="t" style="left:712.3px;top:579px;font-size:19.6px;color:#111;letter-spacing:0.74px;">Tue 3/4/25</span>
<span class="t" style="left:875.3px;top:579px;font-size:19.6px;color:#111;letter-spacing:0.74px;">Tue 3/4/25</span>
<span class="t" style="left:1047.7px;top:579px;font-size:19.6px;color:#111;letter-spacing:1.66px;">11</span>
<span class="t" style="left:50.0px;top:638px;font-size:18.1px;color:#6e6e6e;letter-spacing:-0.06px;">13</span>
<svg style="left:95.1px;top:637.4px" width="22" height="16" viewBox="0 0 22 16"><rect x="0" y="0.5" width="17.8" height="7.4" fill="#4678b8"/><path d="M9.5 10 H19.5 M15.4 6.4 L20 10 L15.4 13.8" stroke="#fff" stroke-width="4" fill="none"/><path d="M10.2 10 H19.8 M15.6 6.6 L20.4 10 L15.6 13.6" stroke="#666" stroke-width="1.9" fill="none"/></svg>
<svg style="left:203.6px;top:641.9px" width="9" height="9" viewBox="0 0 9 9"><path d="M8.4 0.6 V8.4 H0.6 Z" fill="#5e5e5e" stroke="#444" stroke-width="0.7"/></svg>
<span class="t" style="left:216.0px;top:637px;font-size:19.4px;color:#000;letter-spacing:-0.16px;font-weight:bold;">Milestone #2 (BLDG)</span>
<span class="t" style="left:579.4px;top:637px;font-size:19.4px;color:#000;letter-spacing:-0.34px;font-weight:bold;">23 days</span>
<span class="t" style="left:712.3px;top:637px;font-size:19.4px;color:#000;letter-spacing:0.96px;font-weight:bold;">Wed 3/5/25</span>
<span class="t" style="left:875.3px;top:637px;font-size:19.4px;color:#000;letter-spacing:0.59px;font-weight:bold;">Thu 3/27/25</span>
<span class="t" style="left:50.0px;top:671px;font-size:18.1px;color:#6e6e6e;letter-spacing:-0.06px;">14</span>
<svg style="left:95.1px;top:670.3px" width="22" height="16" viewBox="0 0 22 16"><rect x="0" y="0.5" width="17.8" height="7.4" fill="#4678b8"/><path d="M9.5 10 H19.5 M15.4 6.4 L20 10 L15.4 13.8" stroke="#fff" stroke-width="4" fill="none"/><path d="M10.2 10 H19.8 M15.6 6.6 L20.4 10 L15.6 13.6" stroke="#666" stroke-width="1.9" fill="none"/></svg>
<span class="t" style="left:231.3px;top:670px;font-size:19.6px;color:#111;letter-spacing:0.17px;">Cut Concrete - Relocate Floor Drains</span>
<span class="t" style="left:579.4px;top:670px;font-size:19.6px;color:#111;letter-spacing:-0.21px;">3 days</span>
<span class="t" style="left:712.3px;top:670px;font-size:19.6px;color:#111;letter-spacing:0.97px;">Wed 3/5/25</span>
<span class="t" style="left:874.3px;top:670px;font-size:19.6px;color:#111;letter-spacing:0.76px;">Fri 3/7/25</span>
<span class="t" style="left:1047.7px;top:670px;font-size:19.6px;color:#111;letter-spacing:1.66px;">11</span>
<span class="t" style="left:50.0px;top:704px;font-size:18.1px;color:#6e6e6e;letter-spacing:-0.06px;">15</span>
<svg style="left:95.1px;top:703.3px" width="22" height="16" viewBox="0 0 22 16"><rect x="0" y="0.5" width="17.8" height="7.4" fill="#4678b8"/><path d="M9.5 10 H19.5 M15.4 6.4 L20 10 L15.4 13.8" stroke="#fff" stroke-width="4" fill="none"/><path d="M10.2 10 H19.8 M15.6 6.6 L20.4 10 L15.6 13.6" stroke="#666" stroke-width="1.9" fill="none"/></svg>
<span class="t" style="left:231.3px;top:703px;font-size:19.6px;color:#111;">Finalize All MEP Rough-Ins</span>
<span class="t" style="left:578.4px;top:703px;font-size:19.6px;color:#111;letter-spacing:-0.04px;">14 days</span>
<span class="t" style="left:711.3px;top:703px;font-size:19.6px;color:#111;letter-spacing:0.76px;">Fri 3/7/25</span>
<span class="t" style="left:875.3px;top:703px;font-size:19.6px;color:#111;letter-spacing:0.70px;">Thu 3/20/25</span>
<span class="t" style="left:1047.7px;top:704px;font-size:18.5px;color:#111;letter-spacing:-0.17px;clip-path:inset(0 5.2px 0 0);">11FS</span>
<span class="t" style="left:50.0px;top:737px;font-size:18.1px;color:#6e6e6e;letter-spacing:-0.06px;">16</span>
<svg style="left:95.1px;top:736.2px" width="22" height="16" viewBox="0 0 22 16"><rect x="0" y="0.5" width="17.8" height="7.4" fill="#4678b8"/><path d="M9.5 10 H19.5 M15.4 6.4 L20 10 L15.4 13.8" stroke="#fff" stroke-width="4" fill="none"/><path d="M10.2 10 H19.8 M15.6 6.6 L20.4 10 L15.6 13.6" stroke="#666" stroke-width="1.9" fill="none"/></svg>
<span class="t" style="left:231.3px;top:736px;font-size:19.6px;color:#111;letter-spacing:0.21px;">MEP Rough-In Inspections</span>
<span class="t" style="left:579.4px;top:736px;font-size:19.6px;color:#111;letter-spacing:-0.21px;">3 days</span>
<span class="t" style="left:711.3px;top:736px;font-size:19.6px;color:#111;letter-spacing:0.69px;">Fri 3/21/25</span>
<span class="t" style="left:875.3px;top:736px;font-size:19.6px;color:#111;letter-spacing:0.49px;">Sun 3/23/25</span>
<span class="t" style="left:1047.7px;top:736px;font-size:19.1px;color:#111;letter-spacing:0.48px;">15</span>
<span class="t" style="left:50.0px;top:769px;font-size:19px;color:#6e6e6e;letter-spacing:-0.57px;">17</span>
<svg style="left:95.1px;top:769.1px" width="22" height="16" viewBox="0 0 22 16"><rect x="0" y="0.5" width="17.8" height="7.4" fill="#4678b8"/><path d="M9.5 10 H19.5 M15.4 6.4 L20 10 L15.4 13.8" stroke="#fff" stroke-width="4" fill="none"/><path d="M10.2 10 H19.8 M15.6 6.6 L20.4 10 L15.6 13.6" stroke="#666" stroke-width="1.9" fill="none"/></svg>
<span class="t" style="left:231.3px;top:769px;font-size:19.6px;color:#111;letter-spacing:0.27px;">Inspection Punch List Items</span>
<span class="t" style="left:579.4px;top:769px;font-size:19.6px;color:#111;letter-spacing:-0.21px;">4 days</span>
<span class="t" style="left:711.3px;top:769px;font-size:19.6px;color:#111;letter-spacing:1.17px;">Mon 3/24/25</span>
<span class="t" style="left:875.3px;top:769px;font-size:19.6px;color:#111;letter-spacing:0.70px;">Thu 3/27/25</span>
<span class="t" style="left:1047.7px;top:769px;font-size:19.1px;color:#111;letter-spacing:0.48px;">16</span>
<span class="t" style="left:50.0px;top:803px;font-size:18.1px;color:#6e6e6e;letter-spacing:-0.06px;">18</span>
<svg style="left:95.1px;top:802.1px" width="22" height="16" viewBox="0 0 22 16"><rect x="0" y="0.5" width="17.8" height="7.4" fill="#4678b8"/><path d="M9.5 10 H19.5 M15.4 6.4 L20 10 L15.4 13.8" stroke="#fff" stroke-width="4" fill="none"/><path d="M10.2 10 H19.8 M15.6 6.6 L20.4 10 L15.6 13.6" stroke="#666" stroke-width="1.9" fill="none"/></svg>
<span class="t" style="left:231.3px;top:802px;font-size:19.4px;color:#e8131b;letter-spacing:0.10px;font-weight:bold;">Milestone #2 Notice</span>
<span class="t" style="left:579.4px;top:802px;font-size:19.6px;color:#111;letter-spacing:-0.21px;">0 days</span>
<span class="t" style="left:712.3px;top:802px;font-size:19.6px;color:#111;letter-spacing:0.74px;">Thu 3/27/25</span>
<span class="t" style="left:875.3px;top:802px;font-size:19.6px;color:#111;letter-spacing:0.70px;">Thu 3/27/25</span>
<span class="t" style="left:1047.7px;top:802px;font-size:19.6px;color:#111;letter-spacing:0.20px;">17</span>
<span class="t" style="left:50.0px;top:860px;font-size:19px;color:#6e6e6e;letter-spacing:-0.57px;">19</span>
<svg style="left:95.1px;top:860.5px" width="22" height="16" viewBox="0 0 22 16"><rect x="0" y="0.5" width="17.8" height="7.4" fill="#4678b8"/><path d="M9.5 10 H19.5 M15.4 6.4 L20 10 L15.4 13.8" stroke="#fff" stroke-width="4" fill="none"/><path d="M10.2 10 H19.8 M15.6 6.6 L20.4 10 L15.6 13.6" stroke="#666" stroke-width="1.9" fill="none"/></svg>
<svg style="left:203.6px;top:865px" width="9" height="9" viewBox="0 0 9 9"><path d="M8.4 0.6 V8.4 H0.6 Z" fill="#5e5e5e" stroke="#444" stroke-width="0.7"/></svg>
<span class="t" style="left:216.0px;top:860px;font-size:19.4px;color:#000;letter-spacing:0.15px;font-weight:bold;">Milestone #3 (Drywall)</span>
<span class="t" style="left:579.4px;top:860px;font-size:19.4px;color:#000;letter-spacing:-0.34px;font-weight:bold;">24 days</span>
<span class="t" style="left:711.3px;top:860px;font-size:19.4px;color:#000;letter-spacing:0.56px;font-weight:bold;">Fri 3/28/25</span>
<span class="t" style="left:875.3px;top:860px;font-size:19.4px;color:#000;letter-spacing:0.38px;font-weight:bold;">Sun 4/20/25</span>
<span class="t" style="left:51.0px;top:895px;font-size:17.2px;color:#6e6e6e;letter-spacing:0.44px;">20</span>
<svg style="left:95.1px;top:893.4px" width="22" height="16" viewBox="0 0 22 16"><rect x="0" y="0.5" width="17.8" height="7.4" fill="#4678b8"/><path d="M9.5 10 H19.5 M15.4 6.4 L20 10 L15.4 13.8" stroke="#fff" stroke-width="4" fill="none"/><path d="M10.2 10 H19.8 M15.6 6.6 L20.4 10 L15.6 13.6" stroke="#666" stroke-width="1.9" fill="none"/></svg>
<span class="t" style="left:231.3px;top:893px;font-size:19.6px;color:#111;letter-spacing:0.45px;">Installation of Drywall on 1st Level</span>
<span class="t" style="left:578.4px;top:893px;font-size:19.6px;color:#111;">7 days</span>
<span class="t" style="left:711.3px;top:893px;font-size:19.6px;color:#111;letter-spacing:0.69px;">Fri 3/28/25</span>
<span class="t" style="left:875.3px;top:893px;font-size:19.6px;color:#111;letter-spacing:0.77px;">Thu 4/3/25</span>
<span class="t" style="left:1047.7px;top:893px;font-size:19.6px;color:#111;letter-spacing:-0.08px;clip-path:inset(0 0.2px 0 0);">16,1</span>
<div style="left:1089.7px;top:197.7px;width:798.5px;height:52.6px;background:#e6e6e6;"></div>
<div style="left:1089.7px;top:249.7px;width:798.5px;height:1.1px;background:#b9b9b9;"></div>
<div style="left:1229.81px;top:198px;width:1px;height:24px;background:#d2d2d2;"></div>
<div style="left:1391.47px;top:198px;width:1px;height:24px;background:#d2d2d2;"></div>
<div style="left:1547.92px;top:198px;width:1px;height:24px;background:#d2d2d2;"></div>
<div style="left:1709.59px;top:198px;width:1px;height:24px;background:#d2d2d2;"></div>
<div style="left:1866.04px;top:198px;width:1px;height:24px;background:#d2d2d2;"></div>
<div style="left:1162px;top:228px;width:1px;height:22px;background:#d2d2d2;"></div>
<div style="left:1235.01px;top:228px;width:1px;height:22px;background:#d2d2d2;"></div>
<div style="left:1308.02px;top:228px;width:1px;height:22px;background:#d2d2d2;"></div>
<div style="left:1381.03px;top:228px;width:1px;height:22px;background:#d2d2d2;"></div>
<div style="left:1454.04px;top:228px;width:1px;height:22px;background:#d2d2d2;"></div>
<div style="left:1527.05px;top:228px;width:1px;height:22px;background:#d2d2d2;"></div>
<div style="left:1600.06px;top:228px;width:1px;height:22px;background:#d2d2d2;"></div>
<div style="left:1673.07px;top:228px;width:1px;height:22px;background:#d2d2d2;"></div>
<div style="left:1746.08px;top:228px;width:1px;height:22px;background:#d2d2d2;"></div>
<div style="left:1819.09px;top:228px;width:1px;height:22px;background:#d2d2d2;"></div>
<div style="left:1892.1px;top:228px;width:1px;height:22px;background:#d2d2d2;"></div>
<span class="t" style="left:1090.7px;top:204px;font-size:15.4px;color:#747474;letter-spacing:0.05px;">February 1</span>
<span class="t" style="left:1236.6px;top:204px;font-size:15.4px;color:#747474;letter-spacing:0.14px;">March 1</span>
<span class="t" style="left:1398.5px;top:204px;font-size:15.4px;color:#747474;letter-spacing:0.24px;">April 1</span>
<span class="t" style="left:1554.6px;top:204px;font-size:15.4px;color:#747474;letter-spacing:0.19px;">May 1</span>
<span class="t" style="left:1716.2px;top:204px;font-size:15.1px;color:#747474;letter-spacing:-0.28px;">June 1</span>
<span class="t" style="left:1873.4px;top:206px;font-size:13.9px;color:#747474;letter-spacing:-0.39px;clip-path:inset(0 21px 0 0);">July 1</span>
<span class="t" style="left:1114.8px;top:228px;font-size:16px;color:#747474;letter-spacing:0.28px;">2/2</span>
<span class="t" style="left:1182.9px;top:228px;font-size:16px;color:#747474;letter-spacing:0.02px;">2/16</span>
<span class="t" style="left:1260.7px;top:228px;font-size:16px;color:#747474;letter-spacing:0.33px;">3/2</span>
<span class="t" style="left:1328.5px;top:228px;font-size:16px;color:#747474;letter-spacing:0.19px;">3/16</span>
<span class="t" style="left:1401.5px;top:228px;font-size:16px;color:#747474;letter-spacing:0.25px;">3/30</span>
<span class="t" style="left:1474.5px;top:228px;font-size:16px;color:#747474;letter-spacing:0.02px;">4/13</span>
<span class="t" style="left:1547.3px;top:228px;font-size:16px;color:#747474;letter-spacing:0.05px;">4/27</span>
<span class="t" style="left:1620.6px;top:228px;font-size:16px;color:#747474;letter-spacing:0.28px;">5/11</span>
<span class="t" style="left:1693.7px;top:228px;font-size:16px;color:#747474;letter-spacing:0.02px;">5/25</span>
<span class="t" style="left:1771.5px;top:228px;font-size:16px;color:#747474;letter-spacing:0.33px;">6/8</span>
<span class="t" style="left:1839.7px;top:228px;font-size:16px;color:#747474;letter-spacing:0.12px;">6/22</span>
<span class="t" style="left:1212.9px;top:318px;font-size:19.3px;color:#000;letter-spacing:0.81px;font-weight:bold;">Mobilization</span>
<span class="t" style="left:1224.4px;top:351px;font-size:19.3px;color:#000;letter-spacing:0.41px;font-weight:bold;">Site Meetings with all Subs (Site Walk)</span>
<span class="t" style="left:1235.2px;top:385px;font-size:19.3px;color:#000;letter-spacing:0.70px;font-weight:bold;">Tie in / Off Site / ROW work</span>
<span class="t" style="left:1234.9px;top:475px;font-size:19.3px;color:#000;letter-spacing:0.37px;font-weight:bold;">Clean Up Site/Shake Materials</span>
<span class="t" style="left:1260.8px;top:542px;font-size:19.3px;color:#000;letter-spacing:0.22px;font-weight:bold;">Clean Up/Site Concrete/Curbs</span>
<span class="t" style="left:1200.6px;top:574px;font-size:19.3px;color:#000;letter-spacing:1.74px;font-weight:bold;">3/4</span>
<span class="t" style="left:1268.2px;top:574px;font-size:19.3px;color:#000;letter-spacing:0.68px;font-weight:bold;">Milestone #1 Notice</span>
<span class="t" style="left:1388.2px;top:632px;font-size:19.3px;color:#000;letter-spacing:0.40px;font-weight:bold;">Milestone #2 (BLDG)</span>
<span class="t" style="left:1276.7px;top:666px;font-size:19.3px;color:#000;letter-spacing:0.21px;font-weight:bold;">Cut Concrete - Relocate Floor Drains</span>
<span class="t" style="left:1344.0px;top:698px;font-size:19.3px;color:#000;letter-spacing:0.24px;font-weight:bold;">Finalize All MEP Rough-Ins</span>
<span class="t" style="left:1359.3px;top:731px;font-size:19.3px;color:#000;letter-spacing:0.17px;font-weight:bold;">MEP Rough-In Inspections</span>
<span class="t" style="left:1380.2px;top:764px;font-size:19.3px;color:#000;letter-spacing:0.12px;font-weight:bold;">Inspection Punch List Items</span>
<span class="t" style="left:1309.2px;top:797px;font-size:19.3px;color:#000;letter-spacing:1.67px;font-weight:bold;">3/27</span>
<span class="t" style="left:1388.2px;top:797px;font-size:19.3px;color:#000;letter-spacing:0.68px;font-weight:bold;">Milestone #2 Notice</span>
<span class="t" style="left:1513.2px;top:855px;font-size:19.3px;color:#000;letter-spacing:0.69px;font-weight:bold;">Milestone #3 (Drywall)</span>
<span class="t" style="left:1416.4px;top:888px;font-size:19.3px;color:#000;letter-spacing:0.49px;font-weight:bold;">Installation of Drywall on 1st Level</span>
<span class="t" style="left:1636.2px;top:385px;font-size:19.3px;color:#000;letter-spacing:0.43px;font-weight:bold;clip-path:inset(0 35px 0 0);">(City Officials Meeting Onsite)</span>
<svg style="left:1089.7px;top:250.8px" width="798.5" height="662" viewBox="1089.7 250.8 798.5 662"><path d="M1188.4 250.8 V913" stroke="#7faf7f" stroke-width="1"/><path d="M1714.5 250.8 V913" stroke="#9a9a9a" stroke-width="1" stroke-dasharray="1 3"/><rect x="1089.7" y="267" width="537.1" height="8.8" fill="#2aa1a8"/><rect x="1356.1" y="260" width="10.1" height="15.8" fill="#6cc8cf"/><rect x="1460.3" y="260.6" width="35.6" height="6.4" fill="#86b2e8"/><path d="M1188.4 275.8 V259.9 H1714.7" fill="none" stroke="#4b4b4b" stroke-width="1.7"/><path d="M1713.6 260 V275.8 M1715.6 260 V275.8" fill="none" stroke="#4b4b4b" stroke-width="0.8"/><defs><linearGradient id="lg4" x1="0" x2="1" y1="0" y2="0"><stop offset="0" stop-color="#72cbd2" stop-opacity="0"/><stop offset="0.028" stop-color="#72cbd2"/><stop offset="0.955" stop-color="#72cbd2"/><stop offset="1" stop-color="#72cbd2" stop-opacity="0"/></linearGradient></defs><rect x="1190.5" y="292.1" width="436" height="16.6" fill="url(#lg4)"/><rect x="1188.8" y="324.8" width="15.4" height="16.4" fill="#8ab6ea"/><rect x="1204.3" y="357.7" width="10.5" height="16.4" fill="#8ab6ea"/><rect x="1215.1" y="390.6" width="9.8" height="16.4" fill="#8ab6ea"/><rect x="1215.1" y="482.0" width="9.8" height="16.4" fill="#8ab6ea"/><rect x="1210.1" y="514.9" width="19.8" height="16.4" fill="#8ab6ea"/><rect x="1225.2" y="547.9" width="25.6" height="16.4" fill="#8ab6ea"/><rect x="1251.1" y="672.2" width="15.9" height="16.4" fill="#8ab6ea"/><rect x="1262.0" y="705.2" width="72.8" height="16.4" fill="#8ab6ea"/><rect x="1335.1" y="738.1" width="14.8" height="16.4" fill="#8ab6ea"/><rect x="1350.2" y="771.0" width="20.1" height="16.4" fill="#8ab6ea"/><rect x="1371.1" y="895.3" width="36.9" height="16.4" fill="#8ab6ea"/><rect x="1211" y="457.2" width="39.8" height="8.3" fill="#2aa1a8"/><path d="M1209.3 465.3 V449.3 H1553.8 V465.3" fill="none" stroke="#4b4b4b" stroke-width="2.4"/><path d="M1250.3 655.6 V639.6 H1370.4 V655.6" fill="none" stroke="#4b4b4b" stroke-width="2.4"/><path d="M1370.3 878.7 V862.7 H1495.5 V878.7" fill="none" stroke="#4b4b4b" stroke-width="2.4"/><path d="M1204.2 333.5 H1206.8 Q1209.3 333.5 1209.3 336.0 V350.9" fill="none" stroke="#3f80c9" stroke-width="1.1"/><path d="M1202.9 350.9 H1215.7 L1209.3 357.2 Z" fill="#2b78d0"/><path d="M1214.8 366.4 H1217.7 Q1220.2 366.4 1220.2 368.9 V383.8" fill="none" stroke="#3f80c9" stroke-width="1.1"/><path d="M1213.8 383.8 H1226.6 L1220.2 390.1 Z" fill="#2b78d0"/><path d="M1220.2 390.0 V475.2" stroke="#3f80c9" stroke-width="1.1"/><path d="M1213.8 475.2 H1226.6 L1220.2 481.5 Z" fill="#2b78d0"/><path d="M1224.9 490.7 H1227.7 Q1230.2 490.7 1230.2 493.2 V541.1" fill="none" stroke="#3f80c9" stroke-width="1.1"/><path d="M1223.8 541.1 H1236.6 L1230.2 547.4 Z" fill="#2b78d0"/><path d="M1250.8 556.6 H1254.0 Q1256.5 556.6 1256.5 559.1 V574.4" fill="none" stroke="#3f80c9" stroke-width="1.1"/><path d="M1250.1 574.4 H1262.9 L1256.5 580.7 Z" fill="#2b78d0"/><path d="M1256.5 580.2 V665.4" stroke="#3f80c9" stroke-width="1.1"/><path d="M1250.1 665.4 H1262.9 L1256.5 671.7 Z" fill="#2b78d0"/><path d="M1250.8 556.6 H1259.0 Q1261.5 556.6 1261.5 559.1 V698.4" fill="none" stroke="#3f80c9" stroke-width="1.1"/><path d="M1255.1 698.4 H1267.9 L1261.5 704.7 Z" fill="#2b78d0"/><path d="M1334.8 713.9 H1337.7 Q1340.2 713.9 1340.2 716.4 V731.3" fill="none" stroke="#3f80c9" stroke-width="1.1"/><path d="M1333.8 731.3 H1346.6 L1340.2 737.6 Z" fill="#2b78d0"/><path d="M1334.8 713.9 H1421.9 Q1424.4 713.9 1424.4 716.4 V913.0" fill="none" stroke="#3f80c9" stroke-width="1.1"/><path d="M1349.9 746.8 H1353.1 Q1355.6 746.8 1355.6 749.3 V764.2" fill="none" stroke="#3f80c9" stroke-width="1.1"/><path d="M1349.2 764.2 H1362.0 L1355.6 770.5 Z" fill="#2b78d0"/><path d="M1349.9 746.8 H1367.8 Q1370.3 746.8 1370.3 749.3 V888.5" fill="none" stroke="#3f80c9" stroke-width="1.1"/><path d="M1363.9 888.5 H1376.7 L1370.3 894.8 Z" fill="#2b78d0"/><path d="M1370.3 779.7 H1374.0 Q1376.5 779.7 1376.5 782.2 V797.6" fill="none" stroke="#3f80c9" stroke-width="1.1"/><path d="M1370.1 797.6 H1382.9 L1376.5 803.9 Z" fill="#2b78d0"/><path d="M1376.5 803.4 V888.5" stroke="#3f80c9" stroke-width="1.1"/><path d="M1370.1 888.5 H1382.9 L1376.5 894.8 Z" fill="#2b78d0"/><path d="M1370.3 779.7 H1394.2 Q1396.7 779.7 1396.7 782.2 V913.0" fill="none" stroke="#3f80c9" stroke-width="1.1"/><path d="M1408.0 904.0 H1411.3 Q1413.8 904.0 1413.8 906.5 V913.0" fill="none" stroke="#3f80c9" stroke-width="1.1"/><path d="M1250.3 580.8000000000001 L1258.7 589.2 L1250.3 597.6 L1241.8999999999999 589.2 Z" fill="#5c5c5c"/><path d="M1370.3 804.0 L1378.7 812.4 L1370.3 820.8 L1361.8999999999999 812.4 Z" fill="#5c5c5c"/></svg>
<div style="left:1888.3px;top:197.7px;width:23.7px;height:742px;background:#f0f0f0;"></div>
<div style="left:1888.3px;top:198.5px;width:23.2px;height:24.1px;background:#fff;border:1px solid #9a9a9a;box-sizing:border-box"></div>
<svg style="left:1894.6px;top:206.8px" width="12" height="7" viewBox="0 0 12 7"><path d="M0 6.4 L5.8 0.3 L11.6 6.4 Z" fill="#1b1b1b"/></svg>
<div style="left:1888.3px;top:256.3px;width:23.2px;height:277.6px;background:#fff;border:1px solid #9a9a9a;box-sizing:border-box"></div>
<div style="left:1888.8px;top:881.3px;width:22.7px;height:24.1px;background:#fff;border:1px solid #9a9a9a;box-sizing:border-box"></div>
<svg style="left:1894.8px;top:891px" width="12" height="7" viewBox="0 0 12 7"><path d="M0 0.3 H11.2 L5.6 6 Z" fill="#1b1b1b"/></svg>
<div style="left:1888.8px;top:906.8px;width:23.2px;height:1.2px;background:#b5b5b5;"></div>
<div style="left:1888.8px;top:909.2px;width:23.2px;height:1.2px;background:#cfcfcf;"></div>
<div style="left:31px;top:912.8px;width:1857.5px;height:26.7px;background:#f0f0f0;"></div>
<div style="left:0px;top:912.8px;width:31px;height:26.7px;background:#e6e6e6;"></div>
<div style="left:1888.5px;top:912.8px;width:23.5px;height:26.7px;background:#fafafa;"></div>
<div style="left:1085.5px;top:912.8px;width:4.2px;height:26.7px;background:#e0e0e0;"></div>
<div style="left:1085.5px;top:912.8px;width:1px;height:26.7px;background:#c8c8c8;"></div>
<div style="left:1088.9px;top:912.8px;width:1px;height:26.7px;background:#c8c8c8;"></div>
<div style="left:32.4px;top:913.4px;width:24.1px;height:23.8px;background:#fff;border:1px solid #9a9a9a;box-sizing:border-box"></div>
<svg style="left:41.2px;top:920.2px" width="7" height="11" viewBox="0 0 7 11"><path d="M6.4 0 V10.6 L0.2 5.3 Z" fill="#1b1b1b"/></svg>
<div style="left:160.7px;top:913.4px;width:587.8px;height:23.8px;background:#fff;border:1px solid #9a9a9a;box-sizing:border-box"></div>
<div style="left:1059.4px;top:913.4px;width:23.8px;height:23.8px;background:#fff;border:1px solid #9a9a9a;box-sizing:border-box"></div>
<svg style="left:1069px;top:920.2px" width="7" height="11" viewBox="0 0 7 11"><path d="M0.2 0 V10.6 L6.4 5.3 Z" fill="#1b1b1b"/></svg>
<div style="left:1091.5px;top:913.4px;width:24.1px;height:23.8px;background:#fff;border:1px solid #9a9a9a;box-sizing:border-box"></div>
<svg style="left:1099.9px;top:920.2px" width="7" height="11" viewBox="0 0 7 11"><path d="M6.4 0 V10.6 L0.2 5.3 Z" fill="#1b1b1b"/></svg>
<div style="left:1837.3px;top:913.4px;width:25.8px;height:23.8px;background:#fff;border:1px solid #9a9a9a;box-sizing:border-box"></div>
<div style="left:1863.1px;top:913.4px;width:24.3px;height:23.8px;background:#fff;border:1px solid #9a9a9a;box-sizing:border-box"></div>
<svg style="left:1872.8px;top:920.2px" width="7" height="11" viewBox="0 0 7 11"><path d="M0.2 0 V10.6 L6.4 5.3 Z" fill="#1b1b1b"/></svg>
<div style="left:0px;top:939.4px;width:1912px;height:21.6px;background:#f3f3f3;"></div>
<div style="left:31px;top:938.2px;width:1857px;height:1px;background:#fbfbfb;"></div>
<div style="left:0px;top:939.2px;width:1912px;height:1px;background:#c4c4c4;"></div>
<div style="left:1411.2px;top:939.8px;width:59.8px;height:21.2px;background:#c6c6c6;"></div>
<span class="t" style="left:10.9px;top:950px;font-size:14.8px;color:#444;letter-spacing:-0.30px;">Busy</span>
<span class="t" style="left:116.8px;top:949px;font-size:15.2px;color:#444;">New Tasks : Manually Scheduled</span>
<svg style="left:0;top:939.4px" width="1912" height="21.6" viewBox="0 939.4 1912 21.6"><path d="M94.6 961 L99 957" stroke="#555" stroke-width="1.4"/><path d="M105 947.4 L110.8 952.6 L109.2 953.8 L106.8 953.4 L103.4 958 L103.6 961 H98.6 L96.6 956.2 L97.8 955 L100.2 955.6 L104.2 951.4 L103.8 948.6 Z" fill="#555"/><rect x="1432.7" y="947.5" width="17.6" height="16" fill="none" stroke="#666" stroke-width="1.1"/><path d="M1435.6 951 H1441 M1437.4 954 H1444 M1440.4 957 H1447 M1443 960 H1449" stroke="#666" stroke-width="1.1"/><rect x="1492.4" y="947.5" width="18" height="16" fill="#fff" stroke="#666" stroke-width="1.1"/><rect x="1492" y="947" width="19" height="4.6" fill="#666"/><path d="M1498 951 V962 M1502.4 951 V962 M1506.8 951 V962 M1498 955.8 H1511 M1498 959.6 H1511" stroke="#666" stroke-width="1"/><rect x="1552.3" y="947.5" width="18" height="16" fill="#fff" stroke="#666" stroke-width="1.1"/><rect x="1561" y="947" width="9.6" height="6" fill="#666"/><rect x="1552" y="953" width="9" height="6" fill="#666"/><path d="M1552 959 H1570.6" stroke="#666" stroke-width="1"/><rect x="1612.5" y="947.5" width="18" height="16" fill="#fff" stroke="#777" stroke-width="1.1"/><path d="M1618.4 947.5 V962 M1624.4 947.5 V962 M1612.5 953 H1630.5 M1612.5 958.6 H1630.5" stroke="#777" stroke-width="1"/><path d="M1675.4 962 V947.6 H1689.4 V962" fill="none" stroke="#666" stroke-width="1.1"/><path d="M1672.6 950.6 H1677.6 M1672.6 954.4 H1677.6 M1672.6 958.2 H1677.6" stroke="#666" stroke-width="1.2"/><path d="M1719.5 955.6 H1730.7" stroke="#555" stroke-width="1.1"/><path d="M1739.6 955.6 H1886.9" stroke="#444" stroke-width="1.4"/><rect x="1811.9" y="947" width="7.2" height="15" fill="#444"/><path d="M1894.9 955.6 H1906.2 M1900.5 950 V961.2" stroke="#555" stroke-width="1.1"/></svg>
</div></body></html>
